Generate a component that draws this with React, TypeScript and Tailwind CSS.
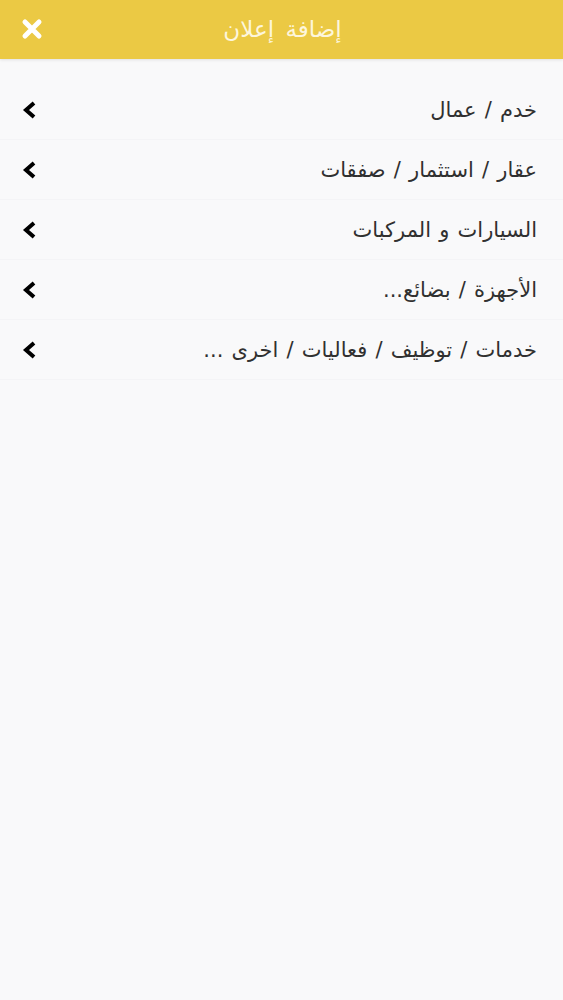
const items = [
  'خدم / عمال',
  'عقار / استثمار / صفقات',
  'السيارات و المركبات',
  'الأجهزة / بضائع...',
  'خدمات / توظيف / فعاليات / اخرى ...',
];

function Chevron() {
  return (
    <svg width="16" height="20" viewBox="0 0 16 20" fill="none">
      <path d="M12 3 L4 10 L12 17" stroke="#000" strokeWidth="4" strokeLinejoin="miter" strokeLinecap="butt" />
    </svg>
  );
}

export default function App() {
  return (
    <div
      className="min-h-[1000px] w-full bg-[#f9f9fa]"
      style={{ fontFamily: '"DejaVu Sans", "Noto Sans", sans-serif' }}
    >
      <header className="relative flex h-[59px] items-center justify-center bg-[#ebc944] shadow-[0_1px_3px_rgba(0,0,0,0.1)]">
        <button className="absolute left-[21px] top-[18px]" aria-label="close">
          <svg width="22" height="22" viewBox="0 0 22 22" fill="none">
            <path d="M4 4 L18 18 M18 4 L4 18" stroke="#fff" strokeWidth="5" strokeLinecap="round" />
          </svg>
        </button>
        <h1 dir="rtl" className="ml-[2px] text-[23px] [word-spacing:4px] text-[#fdf6dc]">إضافة إعلان</h1>
      </header>

      <ul className="mt-[21px]">
        {items.map((label) => (
          <li
            key={label}
            className="flex h-[60px] items-center justify-between border-b border-[#f4f4f6] pl-[22px] pr-[26px]"
          >
            <Chevron />
            <span dir="rtl" className="mt-[3px] text-[21px] [word-spacing:1.5px] text-[#303030]">
              {label}
            </span>
          </li>
        ))}
      </ul>
    </div>
  );
}
